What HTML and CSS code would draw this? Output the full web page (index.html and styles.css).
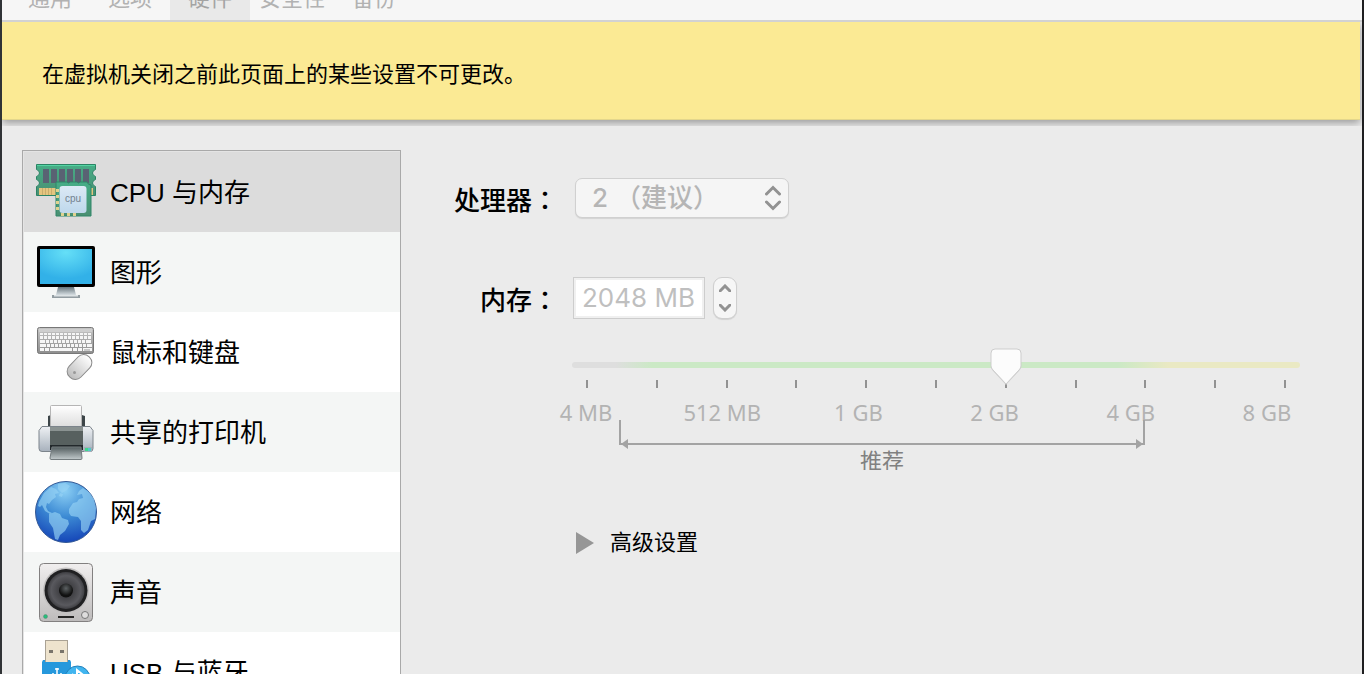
FILE: index.html
```html
<!DOCTYPE html>
<html lang="zh">
<head>
    <meta charset="UTF-8">
    <meta name="viewport" content="width=device-width, initial-scale=1.0">
    <title>硬件</title>
    <link rel="stylesheet" href="styles.css">
</head>
<body>
    <div class="window">
        <nav class="tabs">
            <button class="tab" disabled>通用</button>
            <button class="tab" disabled>选项</button>
            <button class="tab active" disabled>硬件</button>
            <button class="tab wide" disabled>安全性</button>
            <button class="tab" disabled>备份</button>
        </nav>

        <div class="notice-wrap">
            <p class="notice">在虚拟机关闭之前此页面上的某些设置不可更改。</p>
        </div>

        <div class="content">
            <nav class="sidebar">
                <a class="item selected" href="#cpu">
                    <svg class="icon" viewBox="0 0 64 64">
                        <defs>
                            <linearGradient id="board" x1="0" y1="0" x2="0" y2="1"><stop offset="0" stop-color="#46ad87"/><stop offset="1" stop-color="#4a8f72"/></linearGradient>
                            <linearGradient id="chip" x1="0" y1="0" x2="0" y2="1"><stop offset="0" stop-color="#dce9f5"/><stop offset="1" stop-color="#bed8ec"/></linearGradient>
                        </defs>
                        <path d="M2.500 4.500h59v5q-3 1-3 3.500t3 3.500v3q-3 1-3 3.500t3 3.500v9h-59v-9q3-1 3-3.500t-3-3.500v-3q3-1 3-3.500t-3-3.500z" fill="url(#board)" stroke="#2a8465"/>
                        <path d="M3 5.500h58" stroke="#54d4a2"/>
                        <path d="M9 9h6v14h-6zM17 9h6v14h-6zM25 9h6v14h-6zM33 9h6v14h-6zM41 9h6v14h-6zM49 9h6v14h-6z" fill="#596273"/>
                        <path d="M5 28h17v7h-17zM56 28h3v7h-3z" fill="#e4c57f"/>
                        <path d="M8.500 28v7M11.500 28v7M14.500 28v7M17.500 28v7" stroke="#c9ad6e" stroke-width="1"/>
                        <path d="M22 22h11q1.500 2 3 0h7q1.500 2 3 0h7q1 3 4 3v31h-35z" fill="url(#board)" stroke="#2f8668"/>
                        <rect x="25.500" y="26" width="27" height="27" rx="3" fill="url(#chip)"/>
                        <path d="M22 29h3v3h-3zM22 35h3v3h-3zM22 41h3v3h-3zM22 47h3v3h-3zM27 53h3v3h-3zM33 53h3v3h-3zM39 53h3v3h-3z" fill="#dfd28f"/>
                        <text class="chip-text" x="39" y="42" text-anchor="middle">cpu</text>
                    </svg>
                    CPU 与内存
                </a>
                <a class="item" href="#display">
                    <svg class="icon" viewBox="0 0 64 64">
                        <defs>
                            <radialGradient id="screen" cx=".5" cy=".1" r=".75"><stop offset="0" stop-color="#65dff7"/><stop offset="1" stop-color="#32b1e8"/></radialGradient>
                            <linearGradient id="stand" x1="0" y1="0" x2="0" y2="1"><stop offset="0" stop-color="#66747b"/><stop offset="1" stop-color="#d5dde1"/></linearGradient>
                        </defs>
                        <path d="M24 47h16l2 8h-20z" fill="url(#stand)"/>
                        <path d="M18 55h28v3h-28z" fill="#929ca1"/>
                        <path d="M20 55h24v1.500h-24z" fill="#dce2e4"/>
                        <rect x="3" y="6" width="58" height="41" rx="2"/>
                        <rect x="6" y="9" width="52" height="35" fill="url(#screen)"/>
                    </svg>
                    图形
                </a>
                <a class="item" href="#input">
                    <svg class="icon" viewBox="0 0 64 64">
                        <defs>
                            <linearGradient id="keys" x1="0" y1="0" x2="0" y2="1"><stop offset="0" stop-color="#c6c6c6"/><stop offset="1" stop-color="#8e8e8e"/></linearGradient>
                            <linearGradient id="mouse" x1="0" y1="0" x2="0" y2="1"><stop offset="0" stop-color="#fff"/><stop offset="1" stop-color="#bdbdbd"/></linearGradient>
                        </defs>
                        <rect x="3.500" y="7.500" width="56" height="26" rx="2" fill="url(#keys)" stroke="#777"/>
                        <path d="M5 9h53v3h-53z" fill="#cfcfcf"/>
                        <g stroke="#f6f6f6" stroke-width="3">
                            <path d="M6 14h52" stroke-width="2" stroke-dasharray="3 1"/>
                            <path d="M6 17.500h52" stroke-dasharray="3 1"/>
                            <path d="M6 21.500h52" stroke-dasharray="5 1 3 1 3 1 3 1 3 1 3 1 3 1 3 1 3 1 3 1 3 1"/>
                            <path d="M6 25.500h52" stroke-dasharray="6 1 3 1 3 1 3 1 3 1 3 1 3 1 3 1 3 1 3 1 3 1"/>
                            <path d="M6 29.500h52" stroke-dasharray="4 1 4 1 22 1 4 1 4 1 9 0"/>
                        </g>
                        <path d="M50 30h6" stroke="#999"/>
                        <rect x="37.500" y="33" width="16" height="28" rx="7.500" transform="rotate(44 45.500 47)" fill="url(#mouse)" stroke="#8b8b8b"/>
                        <circle cx="40.500" cy="52.500" r="1.500" fill="#999"/>
                    </svg>
                    鼠标和键盘
                </a>
                <a class="item" href="#printer">
                    <svg class="icon" viewBox="0 0 64 64">
                        <defs>
                            <linearGradient id="paper" x1="0" y1="0" x2="0" y2="1"><stop offset="0" stop-color="#fff"/><stop offset="1" stop-color="#d9d9d9"/></linearGradient>
                            <linearGradient id="side" x1="0" y1="0" x2="0" y2="1"><stop offset="0" stop-color="#eef1f4"/><stop offset="1" stop-color="#a7b1bc"/></linearGradient>
                            <linearGradient id="tray" x1="0" y1="0" x2="0" y2="1"><stop offset="0" stop-color="#525c5e"/><stop offset="1" stop-color="#c2cacc"/></linearGradient>
                        </defs>
                        <path d="M14 16l3-1h31l3 1v13h-37z" fill="#3c4548"/>
                        <rect x="16.500" y="5.500" width="31" height="24" rx="1" fill="url(#paper)" stroke="#b5b5b5"/>
                        <path d="M8 26.500h48l3 4v18q0 3-3 3h-48q-3 0-3-3v-18z" fill="url(#side)" stroke="#7c848b"/>
                        <path d="M16 27h33v22h-33z" fill="#57605f"/>
                        <path d="M16 27h33v4h-33z" fill="#8a9291"/>
                        <path d="M16 45h33v5h-33z" fill="#22282b"/>
                        <path d="M18 47h29l1 11q0 1.500-1 1.500h-30q-1 0-1-1.500z" fill="url(#tray)" stroke="#747c7f"/>
                        <rect x="50" y="47" width="8" height="5" fill="#a5afb8"/>
                        <path d="M51 48h3v3h-3z" fill="#40d88c"/>
                        <path d="M54 48h3v3h-3z" fill="#54c9cd"/>
                    </svg>
                    共享的打印机
                </a>
                <a class="item" href="#network">
                    <svg class="icon" viewBox="0 0 64 64">
                        <defs>
                            <radialGradient id="sea" cx=".48" cy=".15" r=".85"><stop offset="0" stop-color="#8dd0f5"/><stop offset=".5" stop-color="#3d8bd4"/><stop offset="1" stop-color="#1546b8"/></radialGradient>
                        </defs>
                        <circle cx="32" cy="32" r="30.500" fill="url(#sea)" stroke="#355a96"/>
                        <g fill="#96d2f4" fill-opacity=".65">
                            <path d="M5 22l5-9 7-6 5 2 3 4-4 1 1 3-4 3-3 4-2-1-1 4 2 4 4 2-2 1-5-3-3-6-2 2-2-1z"/>
                            <path d="M24 4l7-1 5 3-3 4-5 3-4-4z"/>
                            <path d="M15 34l6-2 5 2 2 4 6 2 1 4-4 7-5 4-2 5-3-1-2-11-4-6z"/>
                            <path d="M35 29l4-6 4-1 2-3 4-1-1-4-5 1 2-4 4-3 6 4 5 7 2 9-1 11-4 2-3 9-4 3-3-3v-9l-3-4-7-1-2-3z"/>
                            <path d="M26 13l3 1-1 3-3-1z"/>
                        </g>
                    </svg>
                    网络
                </a>
                <a class="item" href="#sound">
                    <svg class="icon" viewBox="0 0 64 64">
                        <defs>
                            <linearGradient id="box" x1="0" y1="0" x2="0" y2="1"><stop offset="0" stop-color="#f1efef"/><stop offset="1" stop-color="#bdbbbb"/></linearGradient>
                            <radialGradient id="cone"><stop offset="0" stop-color="#2b2b2e"/><stop offset=".8" stop-color="#59595e"/><stop offset="1" stop-color="#3f3f43"/></radialGradient>
                            <radialGradient id="dome" cx=".5" cy=".35"><stop offset="0" stop-color="#5c6163"/><stop offset="1" stop-color="#111"/></radialGradient>
                        </defs>
                        <rect x="5.500" y="3.500" width="53" height="58" rx="4" fill="url(#box)" stroke="#828080"/>
                        <circle cx="32" cy="30.500" r="23" fill="#c2c0c0"/>
                        <circle cx="32" cy="30.500" r="21.500" fill="#202022"/>
                        <circle cx="32" cy="30.500" r="18.500" fill="url(#cone)"/>
                        <circle cx="32" cy="30.500" r="7" fill="url(#dome)"/>
                        <circle cx="11.500" cy="56.500" r="2" fill="#24bf7b" stroke="#5d8473" stroke-width=".5"/>
                        <path d="M24 57h16" stroke="#252525" stroke-width="2"/>
                        <circle cx="51" cy="55" r="3.500" fill="#dedddd" stroke="#777"/>
                    </svg>
                    声音
                </a>
                <a class="item" href="#usb">
                    <svg class="icon" viewBox="0 0 64 64">
                        <rect x="11.500" y=".5" width="22" height="23" fill="#eee3cd" stroke="#aaa294"/>
                        <path d="M15 10h4v3h-4zM26 10h4v3h-4z" fill="#79746b"/>
                        <path d="M9 20h2v2h23v-2h2l1 2v42h-29v-42z" fill="#2698dc"/>
                        <path d="M23 28v18M19 33v5l4 3 4-3v-5M21 29h4" fill="none" stroke="#fff" stroke-width="1.500"/>
                        <circle cx="43.500" cy="38.500" r="12.500" fill="#41b5ef" stroke="#2180bb"/>
                        <path d="M38 34l10 9-5 4v-17l5 4-10 9" fill="none" stroke="#fff" stroke-width="2"/>
                    </svg>
                    USB 与蓝牙
                </a>
            </nav>

            <form class="settings">
                <label class="name" for="cpus">处理器<span class="colon" lang="zh-Hant">：</span></label>
                <div class="select-wrap">
                    <select id="cpus" lang="zh-Hant" disabled>
                        <option>2 （建议）</option>
                    </select>
                    <svg class="arrows" viewBox="0 0 16 26"><path d="M1.500 9L8 2.500 14.500 9M1.500 17L8 23.500 14.500 17"/></svg>
                </div>

                <label class="name memory-row" for="memory">内存<span class="colon" lang="zh-Hant">：</span></label>
                <div class="memory memory-row">
                    <input id="memory" type="text" value="2048 MB" disabled>
                    <div class="stepper">
                        <button type="button" aria-label="增加" disabled><svg viewBox="0 0 12 8"><path d="M1 7l5-5 5 5"/></svg></button>
                        <button type="button" aria-label="减少" disabled><svg viewBox="0 0 12 8"><path d="M1 1l5 5 5-5"/></svg></button>
                    </div>
                </div>

                <div class="slider">
                    <input class="range" type="range" min="0" max="10" value="6" aria-label="内存" disabled>
                    <div class="ticks">
                        <i></i><i></i><i></i><i></i><i></i><i></i><i></i><i></i><i></i><i></i><i></i>
                    </div>
                    <div class="scale">
                        <span>4 MB</span>
                        <span>512 MB</span>
                        <span>1 GB</span>
                        <span>2 GB</span>
                        <span>4 GB</span>
                        <span>8 GB</span>
                    </div>
                    <div class="recommended">
                        <div class="bracket"></div>
                        <div class="recommended-text">推荐</div>
                    </div>
                </div>

                <details class="advanced">
                    <summary>高级设置</summary>
                </details>
            </form>
        </div>
    </div>
</body>
</html>
```

FILE: styles.css
```css
* {
    box-sizing: border-box;
}
body {
    margin: 0;
    padding: 0 2px;
    height: 100vh;
    overflow: hidden;
    background: linear-gradient(to right, #303336 50%, #1e1e20 50%);
    font-family: "Liberation Sans", "Noto Sans CJK SC", sans-serif;
    font-size: 22px;
    color: #000;
}
.window {
    height: 100%;
    display: flex;
    flex-direction: column;
    overflow: hidden;
    background: #ebebeb;
}

/* tabs, scrolled partly out of the window */
.tabs {
    display: flex;
    align-items: flex-end;
    flex: none;
    height: 22px;
    padding-left: 8px;
    overflow: hidden;
    background: #f6f6f6;
    border-bottom: 2px solid #d2d2d2;
}
.tab {
    flex: none;
    width: 80px;
    height: 40px;
    padding: 0 0 8px;
    border: none;
    background: none;
    font: inherit;
    color: #b2b2b2;
}
.tab.wide {
    width: 84px;
}
.tab.active {
    background: #e9e9e9;
    color: #a3a3a3;
}

.notice-wrap {
    flex: none;
    height: 104px;
    padding: 0 2px 6px 0;
    overflow: hidden;
}
.notice {
    margin: 0;
    padding: 0 40px;
    height: 98px;
    line-height: 106px;
    background: #fbea94;
    border-bottom: 1px solid #e3d68c;
    box-shadow: 0 3px 8px rgba(0, 0, 0, 0.35);
}

.content {
    flex: 1;
    display: flex;
    min-height: 0;
    padding: 24px 62px 0 20px;
}
.sidebar {
    flex: none;
    width: 379px;
    padding: 1px 0 0 1px;
    overflow: hidden;
    background: #e4e4e4;
    border: 1px solid #a9a9a9;
    border-bottom: none;
}
.item {
    display: flex;
    align-items: center;
    gap: 12px;
    height: 80px;
    padding: 0 0 4px 10px;
    background: #fff;
    font-size: 26px;
    color: #000;
    text-decoration: none;
}
.item:nth-child(even) {
    background: #f4f6f5;
}
.item.selected {
    background: #dcdcdc;
}
.icon {
    width: 64px;
    height: 64px;
    margin-top: 4px;
}
.chip-text {
    font-size: 10px;
    fill: #73818f;
}

.settings {
    flex: 1;
    display: grid;
    grid-template-columns: 157px 1fr;
    grid-auto-rows: max-content;
    column-gap: 14px;
    align-items: center;
    padding-top: 28px;
}
.name {
    height: 40px;
    text-align: right;
    font-size: 26px;
    font-weight: 500;
    line-height: 42px;
}
.colon {
    font-family: "Noto Sans CJK TC", sans-serif;
}
.select-wrap {
    position: relative;
    width: 214px;
    margin-left: 3px;
}
select {
    display: block;
    width: 100%;
    height: 40px;
    padding: 0 16px 2px;
    appearance: none;
    background: #f5f5f5;
    border: 1px solid #d0d0d0;
    border-radius: 7px;
    box-shadow: 0 1px 1px rgba(0, 0, 0, 0.1);
    font-family: Inter, "Noto Sans CJK TC", sans-serif;
    font-size: 26px;
    font-weight: 500;
    color: #b5b5b5;
    opacity: 1;
}
.arrows {
    position: absolute;
    top: 7px;
    right: 8px;
    width: 16px;
    height: 26px;
    pointer-events: none;
}
.arrows path,
.stepper path {
    fill: none;
    stroke: #929292;
    stroke-width: 3;
    stroke-linecap: round;
}
.memory-row {
    margin-top: 59px;
}
.memory {
    display: flex;
    align-items: center;
    gap: 8px;
    padding-left: 1px;
}
.memory input {
    width: 132px;
    height: 42px;
    padding: 0 8px 2px;
    background: #fff;
    border: 1px solid #cdcdcd;
    border-radius: 0;
    box-shadow: inset 0 0 0 2px #f0f0f0;
    font-family: Inter, sans-serif;
    font-size: 26px;
    color: #bfbfbf;
}
.stepper {
    display: flex;
    flex-direction: column;
    width: 24px;
    height: 42px;
    background: #f6f6f6;
    border: 1px solid #cfcfcf;
    border-radius: 9px;
    box-shadow: 0 1px 1px rgba(0, 0, 0, 0.1);
}
.stepper button {
    display: flex;
    align-items: center;
    justify-content: center;
    flex: 1;
    padding: 0;
    border: none;
    background: none;
}
.stepper svg {
    width: 12px;
    height: 8px;
}

.slider {
    grid-column: 2;
    margin-top: 28px;
}
.range {
    position: relative;
    display: block;
    width: 100%;
    height: 36px;
    margin: 0;
    appearance: none;
    background: none;
}
.range::-webkit-slider-runnable-track {
    height: 6px;
    border-radius: 3px;
    background: linear-gradient(to right, #dedede 6%, #cbe9c5 11%, #cbe9c5 75%, #eae9c3 82%);
}
.range::-webkit-slider-thumb {
    appearance: none;
    width: 32px;
    height: 38px;
    margin-top: -14px;
    background: url("data:image/svg+xml,%3Csvg xmlns='http://www.w3.org/2000/svg' viewBox='0 0 32 38'%3E%3Cpath d='M5 2h22q4 0 4 4v13q0 2-2 4L16 37 3 23q-2-2-2-4V6q0-4 4-4z' fill='%23d0d0d0'/%3E%3Cpath d='M5 1h22q4 0 4 4v13q0 2-2 4L16 36 3 22q-2-2-2-4V5q0-4 4-4z' fill='%23fcfcfc' stroke='%23cdcdcd'/%3E%3C/svg%3E");
}
.ticks {
    display: flex;
    justify-content: space-between;
    margin-top: -3px;
    padding: 0 14px;
}
.ticks i {
    width: 2px;
    height: 8px;
    background: #929292;
}
.scale {
    display: grid;
    grid-template-columns: repeat(6, 1fr);
    height: 32px;
    margin: 0 -35px 0 -54px;
    font-family: "Noto Sans", sans-serif;
    line-height: 48px;
    text-align: center;
    color: #b3b3b3;
}
.recommended {
    margin: 0 155px 0 47px;
}
.bracket {
    position: relative;
    height: 25px;
    border: 2px solid #a3a3a3;
    border-top: none;
}
.bracket::before,
.bracket::after {
    content: "";
    position: absolute;
    bottom: -6px;
    border: 5px solid transparent;
}
.bracket::before {
    left: 0;
    border-left-width: 0;
    border-right: 7px solid #a3a3a3;
}
.bracket::after {
    right: 0;
    border-right-width: 0;
    border-left: 7px solid #a3a3a3;
}
.recommended-text {
    height: 25px;
    overflow: hidden;
    line-height: 34px;
    text-align: center;
    color: #808080;
}

.advanced {
    grid-column: 2;
    margin-top: 57px;
}
.advanced summary {
    display: flex;
    align-items: center;
    gap: 16px;
    padding-left: 4px;
    line-height: 32px;
    list-style: none;
}
.advanced summary::before {
    content: "";
    border: 11px solid transparent;
    border-left: 18px solid #969696;
    border-right-width: 0;
}
```
